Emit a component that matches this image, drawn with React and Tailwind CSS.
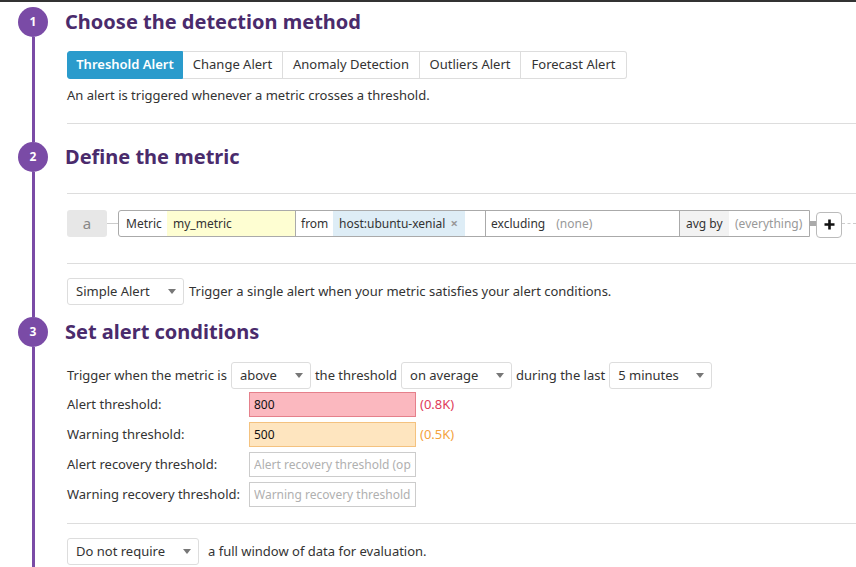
import React from "react";

function Step({ n, children, last }) {
  return (
    <div className="flex">
      <div className="w-[66px] shrink-0 flex flex-col items-center">
        <div className="w-[30px] h-[30px] rounded-full bg-[#7a4ba6] text-white text-[12px] font-bold flex items-center justify-center">
          {n}
        </div>
        <div className="w-[3px] flex-1 bg-[#7a4ba6]" />
      </div>
      <div className={`flex-1 min-w-0 pl-[1px] ${last ? "pb-[4px]" : ""}`}>{children}</div>
    </div>
  );
}

function Heading({ children }) {
  return (
    <h2 className="h-[30px] leading-[30px] text-[20px] font-bold text-[#4a2b6c] -ml-[2px]">{children}</h2>
  );
}

function Caret() {
  return <span className="w-0 h-0 border-l-[4px] border-r-[4px] border-t-[5px] border-l-transparent border-r-transparent border-t-[#777]" />;
}

function Select({ label, className }) {
  return (
    <div className={`flex items-center justify-between shrink-0 h-[27px] border border-[#ddd] rounded-[3px] bg-white pl-2 pr-[7px] ${className}`}>
      <span className="whitespace-nowrap">{label}</span>
      <Caret />
    </div>
  );
}

const tabs = [
  { label: "Threshold Alert", w: "w-[116px]" },
  { label: "Change Alert", w: "w-[100px]" },
  { label: "Anomaly Detection", w: "w-[137px]" },
  { label: "Outliers Alert", w: "w-[101px]" },
  { label: "Forecast Alert", w: "w-[106px]" },
];

export default function App() {
  const thresholds = [
    { label: "Alert threshold:", value: "800", box: "bg-[#fbb8bf] border-[#e5808b]", note: "(0.8K)", noteColor: "text-[#e03c5a]" },
    { label: "Warning threshold:", value: "500", box: "bg-[#fee5bf] border-[#f4c27f]", note: "(0.5K)", noteColor: "text-[#f4a340]" },
    { label: "Alert recovery threshold:", placeholder: "Alert recovery threshold (optional)", box: "bg-white border-[#ccc]" },
    { label: "Warning recovery threshold:", placeholder: "Warning recovery threshold (optional)", box: "bg-white border-[#ccc]" },
  ];

  return (
    <div className="w-[856px] h-[567px] overflow-hidden bg-white text-[#333] text-[13px] font-['Noto_Sans',sans-serif]">
      <div className="h-[2px] bg-[#333]" />
      <div className="pt-[5px]">
        <Step n={1}>
          <Heading>Choose the detection method</Heading>
          <div className="mt-[14px] flex h-[28px]">
            {tabs.map((t, i) => (
              <div
                key={t.label}
                className={`flex items-center justify-center border whitespace-nowrap ${t.w} ${
                  i === 0
                    ? "bg-[#2a9bcc] border-[#2a9bcc] text-white font-semibold rounded-l-[3px]"
                    : "border-[#ddd] border-l-0"
                } ${i === tabs.length - 1 ? "rounded-r-[3px]" : ""}`}
              >
                {t.label}
              </div>
            ))}
          </div>
          <p className="mt-[7px] leading-[18px]">An alert is triggered whenever a metric crosses a threshold.</p>
          <div className="mt-[19px] h-px bg-[#ddd]" />
          <div className="h-[18px]" />
        </Step>

        <Step n={2}>
          <Heading>Define the metric</Heading>
          <div className="mt-[21px] h-px bg-[#ddd]" />
          <div className="mt-[16px] flex items-center h-[27px] whitespace-nowrap text-[12px]">
            <div className="w-[40px] shrink-0 h-full rounded-[3px] bg-[#e7e7e7] text-[#888] text-[15px] flex items-center justify-center">a</div>
            <div className="w-[11px] shrink-0 h-px bg-[#ccc]" />
            <div className="flex shrink-0 h-full border border-[#aaa] rounded-l-[3px] bg-white">
              <div className="w-[48px] shrink-0 flex items-center pl-[7px]">Metric</div>
              <div className="w-[129px] shrink-0 flex items-center pl-[6px] bg-[#fefed2] border-r border-[#aaa]">my_metric</div>
              <div className="w-[37px] shrink-0 flex items-center pl-[5px]">from</div>
              <div className="w-[132px] shrink-0 flex items-center justify-between pl-[6px] pr-[7px] bg-[#deedf6]">
                <span>host:ubuntu-xenial</span>
                <span className="text-[#999] text-[13px] font-bold leading-none">×</span>
              </div>
              <div className="w-[21px] shrink-0 border-r border-[#aaa]" />
              <div className="w-[194px] shrink-0 flex items-center pl-[5px] gap-[11px] border-r border-[#aaa]">
                <span>excluding</span>
                <span className="text-[#999]">(none)</span>
              </div>
              <div className="w-[49px] shrink-0 flex items-center pl-[6px] bg-[#f2f2f2]">avg by</div>
              <div className="w-[80px] shrink-0 flex items-center pl-[6px] text-[#999]">(everything)</div>
            </div>
            <div className="w-[6px] shrink-0 h-[5px] bg-[#aaa]" />
            <div className="w-[26px] h-[26px] shrink-0 mt-[2px] border border-[#bbb] rounded-[4px] bg-white flex items-center justify-center">
              <svg width="11" height="11" viewBox="0 0 11 11">
                <path d="M5.5 0.5v10M0.5 5.5h10" stroke="#111" strokeWidth="2.6" />
              </svg>
            </div>
            <div className="flex-1 border-t border-dashed border-[#ccc]" />
          </div>
          <div className="mt-[26px] h-px bg-[#ddd]" />
          <div className="mt-[14px] flex items-center">
            <Select label="Simple Alert" className="w-[117px]" />
            <span className="ml-[5px]">Trigger a single alert when your metric satisfies your alert conditions.</span>
          </div>
          <div className="h-[12px]" />
        </Step>

        <Step n={3} last>
          <Heading>Set alert conditions</Heading>
          <div className="mt-[15px] flex items-center gap-1 whitespace-nowrap">
            <span>Trigger when the metric is</span>
            <Select label="above" className="w-[80px]" />
            <span>the threshold</span>
            <Select label="on average" className="w-[111px]" />
            <span>during the last</span>
            <Select label="5 minutes" className="w-[103px]" />
          </div>
          <div className="mt-[3px] flex flex-col gap-[5px]">
            {thresholds.map((r) => (
              <div key={r.label} className="flex items-center h-[25px]">
                <span className="w-[182px] shrink-0">{r.label}</span>
                <input
                  readOnly
                  defaultValue={r.value}
                  placeholder={r.placeholder}
                  className={`w-[167px] h-[25px] border px-[4px] text-[12px] text-[#111] placeholder:text-[#b0b0b0] outline-none ${r.box}`}
                />
                {r.note && <span className={`ml-[4px] ${r.noteColor}`}>{r.note}</span>}
              </div>
            ))}
          </div>
          <div className="mt-[16px] h-px bg-[#ddd]" />
          <div className="mt-[14px] flex items-center">
            <Select label="Do not require" className="w-[132px]" />
            <span className="ml-[9px]">a full window of data for evaluation.</span>
          </div>
        </Step>
      </div>
    </div>
  );
}
